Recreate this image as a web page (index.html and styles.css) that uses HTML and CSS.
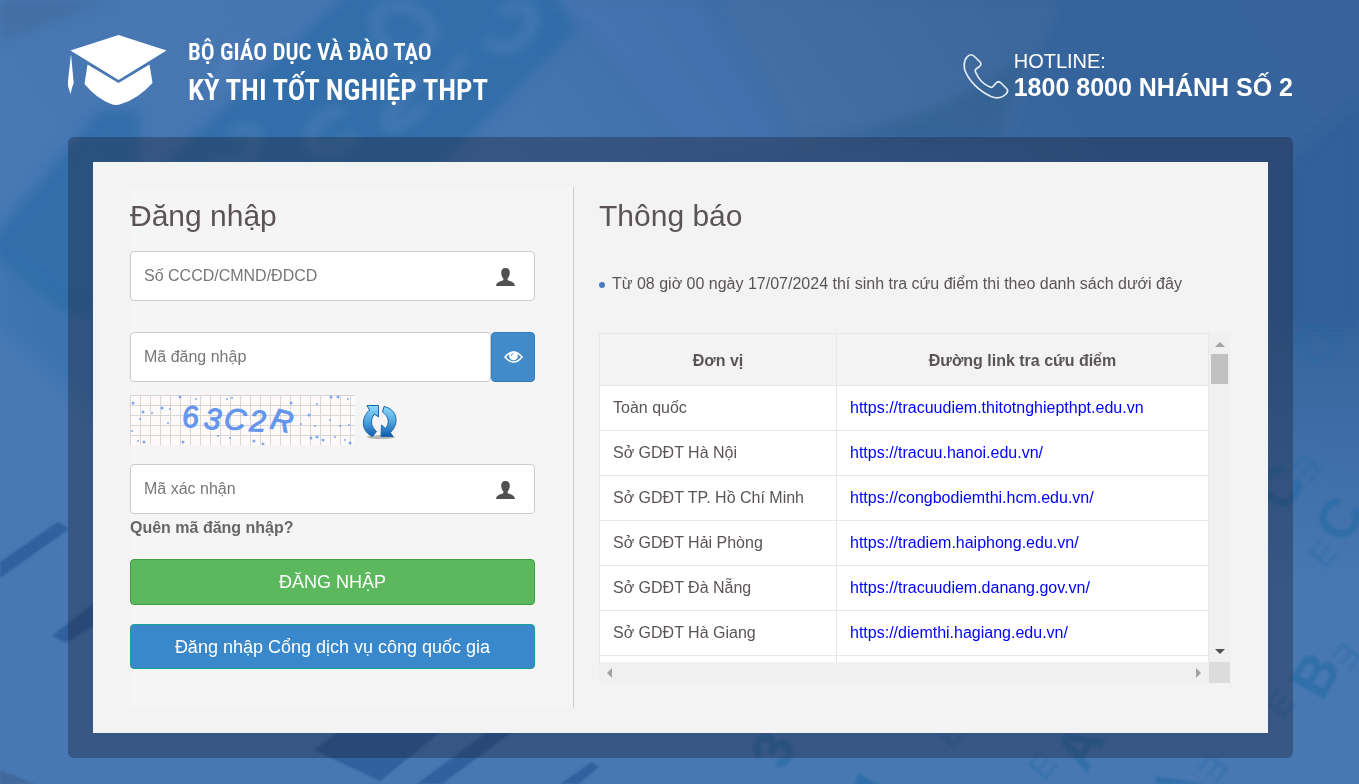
FILE: index.html
```html
<!DOCTYPE html>
<html lang="vi">
<head>
<meta charset="utf-8">
<title>Kỳ thi tốt nghiệp THPT</title>
<link rel="stylesheet" href="styles.css">
</head>
<body>
<svg class="backdrop" viewBox="0 0 1359 784" preserveAspectRatio="xMidYMid slice" aria-hidden="true">
  <defs>
    <linearGradient id="base" x1="0" y1="0.6" x2="1" y2="0.2">
      <stop offset="0" stop-color="#4879b5"/><stop offset="0.5" stop-color="#4474b0"/><stop offset="0.85" stop-color="#34629b"/><stop offset="1" stop-color="#35629b"/>
    </linearGradient>
    <linearGradient id="low" x1="0" y1="0" x2="0" y2="1">
      <stop offset="0.4" stop-color="#4677b2" stop-opacity="0"/><stop offset="0.75" stop-color="#4677b2"/>
    </linearGradient>
    <filter id="soft" x="-20%" y="-20%" width="140%" height="140%"><feGaussianBlur stdDeviation="6"/></filter>
    <filter id="fine"><feGaussianBlur stdDeviation="1"/></filter>
    <pattern id="weave" width="4" height="4" patternUnits="userSpaceOnUse"><path d="M0 0h2v1H0zM2 2h2v1H2z" fill="#fff" opacity="0.03"/></pattern>
  </defs>
  <rect width="1359" height="784" fill="url(#base)"/>
  <rect width="1359" height="784" fill="url(#low)"/>
  <g filter="url(#soft)">
    <path d="M350 -10H550L580 28L400 205H120Z" fill="#2a6ba7" opacity="0.8"/>
    <path d="M-10 240L100 110H140V330L60 310L-10 250Z" fill="#2a6ba7" opacity="0.8"/>
    <path d="M0 250L100 320V420L0 330Z" fill="#2a6ba7" opacity="0.35"/>
    <path d="M0 0H115L0 42Z" fill="#3f6798" opacity="0.55"/>
    <path d="M720 0H1060L1008 137L900 125L800 150L780 110Z" fill="#51729a" opacity="0.25"/>
    <path d="M560 0H700L790 150H690Z" fill="#4a74bb" opacity="0.25"/>
    <path d="M1030 50L1000 137H800Q930 130 1030 50Z" fill="#24577f" opacity="0.35"/>
    <path d="M1359 105L1290 165V330H1359Z" fill="#285a95" opacity="0.5"/>
    <g fill="none" stroke="#5585bf" stroke-width="9" opacity="0.5">
      <path d="M240 40L215 85M375 15Q400 -5 425 18T400 55Q375 45 375 15M500 12Q540 -5 530 30Q510 60 485 40M230 135Q260 120 255 145T210 160M345 110Q310 115 310 145Q330 160 355 135M420 75L385 120Q390 140 425 105M465 55L435 100"/>
    </g>
  </g>
  <g fill="#2d609d" filter="url(#fine)">
    <path d="M0 562L58 522L69 529L0 578Z"/><path d="M52 636L110 590V615L66 643Z"/>
    <path d="M314 750L380 700H480L380 781Z"/><path d="M417 784L530 700H555L442 784Z"/><path d="M560 784L592 762L599 767L578 784Z"/>
    <path d="M0 770L35 784H0Z" fill="#40689b"/>
  </g>
  <g class="letters" filter="url(#fine)">
    <text class="big dim" transform="translate(1318 372) rotate(-50)">O</text>
    <text class="big" transform="translate(1282 515) rotate(-50)">C</text>
    <text class="thin" transform="translate(1305 452) rotate(130)">E</text>
    <text class="big" transform="translate(1346 546) rotate(-60)">C</text>
    <text class="thin" transform="translate(1325 570) rotate(-50)">E</text>
    <text class="big" transform="translate(1322 702) rotate(-60)">B</text>
    <text class="thin" transform="translate(1282 720) rotate(-50)">E</text>
    <text class="thin" transform="translate(1345 640) rotate(130)">E</text>
    <text class="big" transform="translate(1086 774) rotate(-60)">A</text>
    <text class="thin" transform="translate(1044 782) rotate(-50)">E</text>
    <text class="thin" transform="translate(1212 752) rotate(130)">E</text>
    <text class="big" transform="translate(784 772) rotate(-65)">3</text>
    <text class="thin" transform="translate(952 750) rotate(-50)">E</text>
    <path d="M858 773L905 800H850ZM1156 776L1205 784H1156Z"/>
  </g>
  <rect width="1359" height="784" fill="url(#weave)"/>
</svg>

<div class="page">
  <header class="header">
    <div class="brand">
      <svg class="brand-mark" viewBox="68 35 99 70" aria-hidden="true" fill="#fff">
        <path d="M118.500 35L166.500 50.500L118.500 80L70.500 50.500Z"/>
        <path d="M87.500 64.500L118.500 83L149.500 64.500L152.500 83Q138 99 121 104Q116 106 111 104Q96 98 84.500 84Z"/>
        <path d="M71 54L73.700 83L72 88L70.500 94L68 86V81Z"/>
      </svg>
      <div class="brand-text">
        <span class="brand-top">BỘ GIÁO DỤC VÀ ĐÀO TẠO</span>
        <h1 class="brand-name">KỲ THI TỐT NGHIỆP THPT</h1>
      </div>
    </div>
    <div class="hotline">
      <svg class="phone" viewBox="962 53 46 46" aria-hidden="true" fill="none" stroke="#e3ebf5" stroke-width="1.700" stroke-linejoin="round">
        <path d="M966 57Q970 52.500 974 57L979 62Q981 64 978.500 66.500L975 69Q973.500 70.500 975 73C978 80 984 85 989 87Q991 88 992.500 86L995 83Q997.500 80.500 1000 83L1005.500 88.500Q1008 91 1005 94C1001 98 995 98.500 990 96.500C978 91 968 81 964 70.500C962.500 65 963 60.500 966 57Z"/>
      </svg>
      <div class="hotline-text">
        <span class="hotline-label">HOTLINE:</span>
        <strong class="hotline-number">1800 8000 NHÁNH SỐ 2</strong>
      </div>
    </div>
  </header>

  <main class="frame">
    <div class="card">
      <section class="login">
        <h2 class="title">Đăng nhập</h2>
        <form class="form">
          <div class="field field-id">
            <input class="input" type="text" aria-label="Số CCCD/CMND/ĐDCD" placeholder="Số CCCD/CMND/ĐDCD">
            <svg class="user" viewBox="0 0 19 18" aria-hidden="true"><path d="M9.500 0C12.600 0 14 2 13.800 5C13.600 8 12.500 9.500 11.600 10.500V12C12 13 18.500 13 19 18H0C0.500 13 7 13 7.400 12V10.500C6.500 9.500 5.400 8 5.200 5C5 2 6.400 0 9.500 0Z"/></svg>
          </div>
          <div class="secret">
            <input class="input" type="password" aria-label="Mã đăng nhập" placeholder="Mã đăng nhập">
            <button class="reveal" type="button" aria-label="Hiện mã đăng nhập">
              <svg class="eye" viewBox="0 0 19 12" aria-hidden="true"><path d="M1 6Q5 1 9.500 1T18 6Q14 11 9.500 11T1 6Z" fill="none" stroke="#fff" stroke-width="1.600"/><circle cx="9.500" cy="4.800" r="4.400" fill="#fff"/><path d="M7.300 5Q7.300 2.700 9.500 2.600" fill="none" stroke="#428bca" stroke-width="0.800"/></svg>
            </button>
          </div>
          <div class="captcha">
            <svg class="captcha-image" viewBox="0 0 225 50" role="img" aria-label="Mã xác nhận">
              <defs><pattern id="grid" width="10" height="10" patternUnits="userSpaceOnUse"><path d="M0 0.500H10M0.500 0V10" stroke="#d8d6d5" stroke-width="1"/></pattern></defs>
              <rect width="225" height="50" fill="#fffafa"/><rect width="225" height="50" fill="url(#grid)"/>
              <g fill="#7da7f5">
                <circle cx="3" cy="8" r="1.500"/><circle cx="50" cy="2" r="1.500"/><circle cx="32" cy="13" r="1.500"/><circle cx="13" cy="17" r="1.500"/><circle cx="40" cy="14" r="1"/><circle cx="10" cy="24" r="1"/><circle cx="38" cy="28" r="1"/><circle cx="2" cy="36" r="1"/><circle cx="14" cy="47" r="1.500"/><circle cx="53" cy="47" r="1.500"/><circle cx="8" cy="46" r="1"/><circle cx="100" cy="43" r="1"/><circle cx="124" cy="46" r="1.500"/><circle cx="133" cy="49" r="1.500"/><circle cx="88" cy="41" r="1"/><circle cx="97" cy="4" r="1"/><circle cx="102" cy="3" r="1"/><circle cx="161" cy="8" r="1.500"/><circle cx="179" cy="20" r="1.500"/><circle cx="187" cy="9" r="1"/><circle cx="201" cy="2" r="1.500"/><circle cx="208" cy="2" r="1.500"/><circle cx="218" cy="4" r="1"/><circle cx="185" cy="31" r="1"/><circle cx="200" cy="25" r="1"/><circle cx="210" cy="31" r="1"/><circle cx="219" cy="30" r="1"/><circle cx="181" cy="43" r="1.500"/><circle cx="187" cy="42" r="1.500"/><circle cx="193" cy="45" r="1.500"/><circle cx="205" cy="42" r="1"/><circle cx="215" cy="45" r="1"/><circle cx="220" cy="48" r="1.500"/><circle cx="171" cy="29" r="1"/><circle cx="22" cy="18" r="1"/><circle cx="66" cy="4" r="1"/>
              </g>
              <text class="captcha-code" y="33 33 33 36 33" x="53 73 93 119 139" rotate="-6 8 8 2 14">63C2R</text>
            </svg>
            <button class="refresh" type="button" aria-label="Đổi mã xác nhận">
              <svg class="refresh-icon" viewBox="0 0 36 36" aria-hidden="true">
                <defs><linearGradient id="blue" x1="0" y1="0" x2="0" y2="1"><stop offset="0" stop-color="#8fd8f8"/><stop offset="0.5" stop-color="#51a7e0"/><stop offset="1" stop-color="#0c5cae"/></linearGradient></defs>
                <ellipse cx="19" cy="33" rx="14" ry="2" fill="#000" opacity="0.25"/>
                <path d="M5 1.500H16.500V13L12.500 10C8 16 8.500 22 14.500 27.500L10.500 32.500C0 28 -2 15 7.500 6Z" fill="url(#blue)" stroke="#1b65a8"/>
                <path d="M31 32.500H19L19.500 21L23.500 24.500C28 19 27 12.500 20.500 8L22 2.500C35 5 38 19 28.500 28.500Z" fill="url(#blue)" stroke="#1b65a8"/>
              </svg>
            </button>
          </div>
          <div class="field">
            <input class="input" type="text" aria-label="Mã xác nhận" placeholder="Mã xác nhận">
            <svg class="user" viewBox="0 0 19 18" aria-hidden="true"><path d="M9.500 0C12.600 0 14 2 13.800 5C13.600 8 12.500 9.500 11.600 10.500V12C12 13 18.500 13 19 18H0C0.500 13 7 13 7.400 12V10.500C6.500 9.500 5.400 8 5.200 5C5 2 6.400 0 9.500 0Z"/></svg>
          </div>
          <a class="forgot" href="#">Quên mã đăng nhập?</a>
          <button class="button button-green" type="submit">ĐĂNG NHẬP</button>
          <button class="button button-blue" type="button">Đăng nhập Cổng dịch vụ công quốc gia</button>
        </form>
      </section>

      <section class="news">
        <h2 class="title">Thông báo</h2>
        <ul class="notes"><li class="note">Từ 08 giờ 00 ngày 17/07/2024 thí sinh tra cứu điểm thi theo danh sách dưới đây</li></ul>
        <div class="scroller">
          <div class="viewport">
            <table class="links">
              <thead><tr><th class="unit">Đơn vị</th><th>Đường link tra cứu điểm</th></tr></thead>
              <tbody>
                <tr><td>Toàn quốc</td><td><a href="#">https://tracuudiem.thitotnghiepthpt.edu.vn</a></td></tr>
                <tr><td>Sở GDĐT Hà Nội</td><td><a href="#">https://tracuu.hanoi.edu.vn/</a></td></tr>
                <tr><td>Sở GDĐT TP. Hồ Chí Minh</td><td><a href="#">https://congbodiemthi.hcm.edu.vn/</a></td></tr>
                <tr><td>Sở GDĐT Hải Phòng</td><td><a href="#">https://tradiem.haiphong.edu.vn/</a></td></tr>
                <tr><td>Sở GDĐT Đà Nẵng</td><td><a href="#">https://tracuudiem.danang.gov.vn/</a></td></tr>
                <tr><td>Sở GDĐT Hà Giang</td><td><a href="#">https://diemthi.hagiang.edu.vn/</a></td></tr>
                <tr><td></td><td></td></tr>
              </tbody>
            </table>
          </div>
          <div class="bar bar-y" aria-hidden="true">
            <svg class="arrow" viewBox="0 0 10 10"><path d="M0 8L5 3L10 8Z" fill="#a3a3a3"/></svg>
            <span class="thumb"></span>
            <svg class="arrow arrow-end" viewBox="0 0 10 10"><path d="M0 3L5 8L10 3Z" fill="#505050"/></svg>
          </div>
          <div class="bar bar-x" aria-hidden="true">
            <svg class="arrow" viewBox="0 0 10 10"><path d="M7 0L2 5L7 10Z" fill="#a3a3a3"/></svg>
            <svg class="arrow arrow-end" viewBox="0 0 10 10"><path d="M3 0L8 5L3 10Z" fill="#a3a3a3"/></svg>
          </div>
          <div class="corner"></div>
        </div>
      </section>
    </div>
  </main>
</div>
</body>
</html>
```

FILE: styles.css
```css
* { box-sizing: border-box; }

body {
  margin: 0;
  min-height: 100vh;
  background: #4677b2;
  color: #5a5554;
  font: 16px/20px "Liberation Sans", Arial, sans-serif;
}

h1, h2, ul { margin: 0; padding: 0; font-weight: normal; }
button { padding: 0; border: 0; background: none; font: inherit; cursor: pointer; }
svg { display: block; }

.backdrop { position: fixed; inset: 0; z-index: -1; width: 100%; height: 100%; }
.letters { fill: #266ba6; opacity: 0.7; }
.big { font: bold 56px "Liberation Sans", sans-serif; }
.dim { opacity: 0.3; }
.thin { font: 34px "Liberation Sans", sans-serif; opacity: 0.6; }

.page { padding: 0 66px 26px 68px; }

.header {
  display: flex;
  justify-content: space-between;
  height: 137px;
  padding-top: 35px;
  color: #fff;
}
.brand { display: flex; gap: 21px; }
.brand-mark { width: 99px; height: 70px; }
.brand-text {
  display: flex;
  flex-direction: column;
  font-family: "Roboto Condensed", "Liberation Sans Narrow", Roboto, sans-serif;
}
.brand-top { font-size: 23px; line-height: 36px; font-weight: 600; }
.brand-name { font-size: 29px; line-height: 38px; font-weight: 600; }

.hotline { display: flex; gap: 5px; padding-top: 15px; }
.phone { width: 46px; height: 46px; margin-top: 3px; }
.hotline-text { display: flex; flex-direction: column; }
.hotline-label { font-size: 20px; line-height: 22px; }
.hotline-number { font-size: 25px; line-height: 30px; }

.frame { padding: 25px; border-radius: 6px; background: rgba(30, 38, 60, 0.4); }
.card {
  display: grid;
  grid-template-columns: 444fr 631fr;
  gap: 25px;
  padding: 25px 38px 25px 37px;
  background: #f3f3f3;
}

.title { font-size: 30px; line-height: 40px; padding-top: 9px; }

.login { padding: 0 38px 39px 0; border-right: 1px solid #ccc; background: #f5f5f5; }
.form { display: flex; flex-direction: column; padding-top: 15px; }
.field { position: relative; }
.field-id { margin-bottom: 31px; }
.input {
  display: block;
  width: 100%;
  height: 50px;
  padding: 0 50px 0 13px;
  border: 1px solid #ccc;
  border-radius: 4px;
  background: #fff;
  font: inherit;
}
.input::placeholder { color: #777; opacity: 1; }
.user { position: absolute; right: 20px; top: 17px; width: 19px; height: 18px; fill: #505050; }
.secret { display: flex; }
.reveal {
  display: grid;
  flex: none;
  place-items: center;
  width: 44px;
  border: 1px solid #357ebd;
  border-radius: 4px;
  background: #428bca;
}
.eye { width: 19px; height: 12px; }
.captcha { display: flex; gap: 7px; padding: 13px 0 19px; }
.captcha-image { width: 225px; height: 50px; }
.captcha-code { fill: #6495ed; font: italic 30px "Liberation Sans", sans-serif; stroke: #6495ed; }
.refresh { display: flex; padding-top: 9px; }
.refresh-icon { width: 36px; height: 36px; }
.forgot { padding: 4px 0 21px; color: #666; font-weight: bold; text-decoration: none; }
.button { height: 46px; border: 1px solid; border-radius: 4px; color: #fff; font-size: 18px; }
.button-green { border-color: #3fa23f; background: #5cb85c; }
.button-blue { height: 45px; margin-top: 19px; border-color: #17a08b; background: #3888cb; }

.news { min-width: 0; }
.notes { padding: 38px 0 39px; list-style: none; }
.note { display: flex; align-items: center; gap: 7px; }
.note::before { content: ""; width: 6px; height: 6px; margin-top: 2px; border-radius: 50%; background: #4a7ebb; }

.scroller { display: grid; grid-template: 329px 21px / 1fr 21px; }
.viewport { overflow: hidden; }
.links { width: 100%; border-collapse: collapse; }
.links th, .links td { height: 45px; padding: 0 13px; border: 1px solid #e7e7e7; text-align: left; }
.links td { background: #fff; }
.links th { height: 52px; padding-top: 2px; text-align: center; }
.links .unit { width: 237px; }
.links a { color: #00f; text-decoration: none; }

.bar { display: flex; align-items: center; background: #f0f0f0; }
.bar-y { flex-direction: column; padding: 6px 0; }
.bar-x { padding: 0 6px; }
.arrow { width: 10px; height: 10px; }
.arrow-end { margin-top: auto; }
.bar-x .arrow-end { margin: 0 0 0 auto; }
.thumb { width: 17px; height: 30px; margin-top: 5px; background: #c1c1c1; }
.corner { background: #dcdcdc; }
```
